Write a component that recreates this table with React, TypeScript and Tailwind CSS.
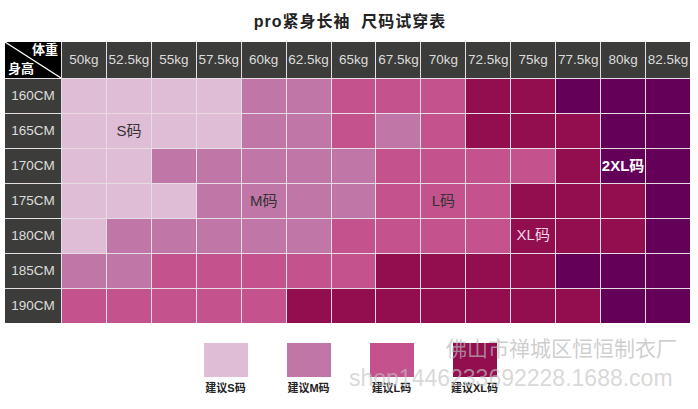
import React from "react"

const weights = ["50kg", "52.5kg", "55kg", "57.5kg", "60kg", "62.5kg", "65kg", "67.5kg", "70kg", "72.5kg", "75kg", "77.5kg", "80kg", "82.5kg"]

const rows: { h: string; sizes: string }[] = [
  { h: "160CM", sizes: "SSSSMMLLLXX222" },
  { h: "165CM", sizes: "SSSSMMLMLXXX22" },
  { h: "170CM", sizes: "SSMMMMMLLLLX22" },
  { h: "175CM", sizes: "SSSMMMMLLLXXX2" },
  { h: "180CM", sizes: "SMMMMMLLLLXXX2" },
  { h: "185CM", sizes: "MMLLLLLXXXX222" },
  { h: "190CM", sizes: "LLLLLXXXXXXX22" },
]

const colors: Record<string, string> = {
  S: "bg-[#dfbdd7]",
  M: "bg-[#c077a7]",
  L: "bg-[#c4528c]",
  X: "bg-[#920e4f]",
  "2": "bg-[#650058]",
}

// labels sitting inside a cell: "row-col"
const labels: Record<string, { text: string; cls: string }> = {
  "1-1": { text: "S码", cls: "text-[#333]" },
  "3-4": { text: "M码", cls: "text-[#333]" },
  "3-8": { text: "L码", cls: "text-[#333]" },
  "4-10": { text: "XL码", cls: "text-[#f3d6e4] -mt-[2px]" },
  "2-12": { text: "2XL码", cls: "text-white font-bold" },
}

const legend = [
  { label: "建议S码", color: "bg-[#dfbdd7]" },
  { label: "建议M码", color: "bg-[#c077a7]" },
  { label: "建议L码", color: "bg-[#c4528c]" },
  { label: "建议XL码", color: "bg-[#920e4f]" },
]

export default function App() {
  return (
    <div className="relative h-[409px] w-[698px] overflow-hidden bg-white font-['Liberation_Sans','Noto_Sans_CJK_SC',sans-serif]">
      <h1 className="flex h-[42px] items-center justify-center pt-[2px] pl-[2px] text-[16px] font-bold tracking-[1px] text-[#222]">
        pro紧身长袖&nbsp;&nbsp;尺码试穿表
      </h1>

      <div className="ml-[5px] grid w-[685px] grid-cols-[56px_repeat(14,1fr)] grid-rows-[36px_repeat(7,34px)] gap-px bg-[#e6dce3]">
        <div className="relative bg-black">
          <svg className="absolute inset-0" width="56" height="36">
            <line x1="0" y1="0" x2="56" y2="36" stroke="white" strokeWidth="1.2" />
          </svg>
          <span className="absolute right-[3px] top-[1px] text-[13px] font-bold leading-none text-white">体重</span>
          <span className="absolute bottom-[3px] left-[3px] text-[13px] font-bold leading-none text-white">身高</span>
        </div>
        {weights.map((w) => (
          <div key={w} className="flex items-center justify-center whitespace-nowrap bg-[#3c3c3a] text-[13.5px] text-[#dcdcdc]">
            {w}
          </div>
        ))}

        {rows.map((r, ri) => (
          <React.Fragment key={r.h}>
            <div className="flex items-center justify-center bg-[#3c3c3a] text-[13.5px] text-[#dcdcdc]">{r.h}</div>
            {r.sizes.split("").map((s, ci) => {
              const lab = labels[`${ri}-${ci}`]
              return (
                <div key={ci} className={`flex items-center justify-center whitespace-nowrap text-[15px] ${colors[s]}`}>
                  {lab && <span className={lab.cls}>{lab.text}</span>}
                </div>
              )
            })}
          </React.Fragment>
        ))}
      </div>

      <div className="mt-[20px] flex justify-center gap-[39px] pl-[2px]">
        {legend.map((l) => (
          <div key={l.label} className="flex w-[44px] flex-col items-center">
            <div className={`h-[34px] w-[44px] ${l.color}`} />
            <span className="mt-[6px] whitespace-nowrap text-[11px] font-bold leading-none text-[#222]">{l.label}</span>
          </div>
        ))}
      </div>

      <div className="pointer-events-none absolute left-[446px] top-[338px] whitespace-nowrap text-[21px] leading-none text-[rgba(185,185,185,0.7)]">
        佛山市禅城区恒恒制衣厂
      </div>
      <div className="pointer-events-none absolute left-[349px] top-[367px] whitespace-nowrap text-[23px] leading-none text-[rgba(195,195,195,0.65)]">
        shop1446233692228.1688.com
      </div>
    </div>
  )
}
